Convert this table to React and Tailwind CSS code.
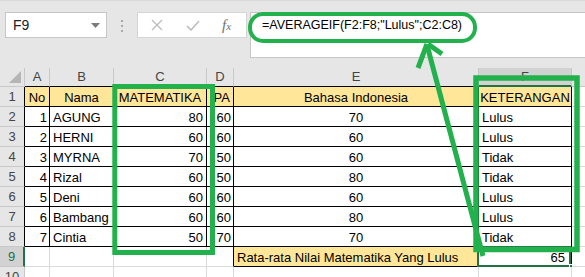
import React from "react";

// Sheet data: row 1 is the header, rows 2-8 the students
const rows = [
  ["No", "Nama", "MATEMATIKA", "IPA", "Bahasa Indonesia", "KETERANGAN"],
  [1, "AGUNG", 80, 60, 70, "Lulus"],
  [2, "HERNI", 60, 60, 60, "Lulus"],
  [3, "MYRNA", 70, 50, 60, "Tidak"],
  [4, "Rizal", 60, 50, 80, "Tidak"],
  [5, "Deni", 60, 60, 60, "Lulus"],
  [6, "Bambang", 60, 60, 80, "Lulus"],
  [7, "Cintia", 50, 70, 70, "Tidak"],
];

const letters = ["A", "B", "C", "D", "E", "F", "G"];
const align = [
  "justify-end pr-[2px]",
  "justify-start pl-[3px]",
  "justify-end pr-[3px]",
  "justify-end pr-[2px]",
  "justify-center",
  "justify-start pl-[3px]",
  "justify-start",
];

// cells that carry the black table border
const bordered = (r, c) =>
  (r >= 1 && r <= 8 && c >= 0 && c <= 5) || (r === 9 && (c === 4 || c === 5));

const FormulaBar = () => (
  <div className="flex h-[68px] items-start border-t border-[#d9d9d9] bg-[#e6e6e6] pt-[11px]">
    <div className="ml-[5px] flex h-[26px] w-[102px] items-center justify-between border border-[#c6c6c6] bg-white pl-[7px] pr-[6px]">
      <span className="text-[14px] text-[#222]">F9</span>
      <svg width="9" height="5" viewBox="0 0 9 5">
        <path d="M0 0h9L4.5 5z" fill="#7a7a7a" />
      </svg>
    </div>
    <div className="flex w-[30px] flex-col items-center gap-[3px] pt-[8px]">
      <span className="h-[2px] w-[2px] bg-[#a8a8a8]" />
      <span className="h-[2px] w-[2px] bg-[#a8a8a8]" />
      <span className="h-[2px] w-[2px] bg-[#a8a8a8]" />
    </div>
    <div className="flex h-[26px] w-[110px] items-center border border-[#d4d4d4] bg-white">
      <svg className="ml-[13px]" width="12" height="12" viewBox="0 0 12 12">
        <path d="M1 1l10 10M11 1L1 11" stroke="#bdbdbd" strokeWidth="1.4" />
      </svg>
      <svg className="ml-[23px]" width="14" height="11" viewBox="0 0 14 11">
        <path d="M1 6l4 4 8-9" stroke="#bdbdbd" strokeWidth="1.6" fill="none" />
      </svg>
      <span className="ml-[22px] font-['Liberation_Serif',serif] text-[15px] italic text-[#6e6e6e]">
        f<span className="text-[11px]">x</span>
      </span>
    </div>
    <div className="ml-[3px] h-[46px] flex-1 border border-r-0 border-[#c6c6c6] bg-white pl-[11px] pt-[2px] text-[12.5px] leading-[21px] text-black">
      =AVERAGEIF(F2:F8;"Lulus";C2:C8)
    </div>
  </div>
);

const ColHeader = ({ c }) => {
  const active = c === 5;
  // column G runs past the window, so its letter sits out of view
  const offset = c === 6 ? "justify-start overflow-hidden pl-[48px]" : "justify-center";
  return (
    <div
      className={`flex items-center border-r border-r-[#c8c8c8] text-[13px] ${offset} ${
        active
          ? "border-b-2 border-b-[#217346] bg-[#d2d2d2] text-[#444]"
          : `border-b ${bordered(1, c) ? "border-b-black" : "border-b-[#c8c8c8]"} bg-[#e6e6e6] text-[#444]`
      }`}
    >
      {letters[c]}
    </div>
  );
};

const RowHeader = ({ r }) => {
  const active = r === 9;
  return (
    <div
      className={`flex items-center justify-center border-b border-b-[#c8c8c8] text-[13px] ${
        active
          ? "border-r-2 border-r-[#217346] bg-[#d2d2d2] text-[#217346]"
          : `border-r ${bordered(r, 0) ? "border-r-black" : "border-r-[#c8c8c8]"} bg-[#e6e6e6] text-[#444]`
      }`}
    >
      {r}
    </div>
  );
};

const Cell = ({ r, c, children }) => {
  const right = bordered(r, c) || bordered(r, c + 1);
  const bottom = bordered(r, c) || bordered(r + 1, c);
  const yellow = r === 1 && c <= 5;
  const alignment = r === 1 ? "justify-center" : align[c];
  return (
    <div
      className={`relative flex items-center overflow-hidden whitespace-nowrap border-r border-b pt-[2px] text-[13px] ${
        right ? "border-r-black" : "border-r-[#dadada]"
      } ${bottom ? "border-b-black" : "border-b-[#dadada]"} ${
        yellow ? "bg-[#ffe699]" : "bg-white"
      } ${alignment}`}
    >
      {children}
    </div>
  );
};

const Sheet = () => {
  const body = [];
  for (let r = 1; r <= 10; r++) {
    body.push(<RowHeader key={`h${r}`} r={r} />);
    for (let c = 0; c < 7; c++) {
      const key = `${r}-${c}`;
      if (r <= 8) {
        body.push(
          <Cell key={key} r={r} c={c}>
            {c <= 5 ? rows[r - 1][c] : null}
          </Cell>
        );
      } else if (r === 9 && c === 4) {
        body.push(
          <div
            key={key}
            className="flex items-center justify-start whitespace-nowrap border-r border-b border-black bg-[#ffe699] pl-[3px] pt-[2px] text-[13px]"
          >
            Rata-rata Nilai Matematika Yang Lulus
          </div>
        );
      } else if (r === 9 && c === 5) {
        body.push(
          <div
            key={key}
            className="relative flex items-center justify-end border-r border-b border-black bg-white pr-[6px] pt-[2px] text-[13px]"
          >
            65
            <div className="absolute left-[-2px] top-[-1px] h-[calc(100%+2px)] w-[calc(100%+2px)] border-2 border-[#217346]" />
            <div className="absolute bottom-[-4px] right-[-4px] h-[6px] w-[6px] border border-white bg-[#217346]" />
          </div>
        );
      } else {
        body.push(<Cell key={key} r={r} c={c} />);
      }
    }
  }

  return (
    <div className="grid grid-cols-[25px_25px_64px_93px_27px_245px_93px_1fr] grid-rows-[19px_repeat(10,20px)]">
      <div className="relative border-r border-b border-[#c8c8c8] bg-[#e6e6e6]">
        <svg className="absolute bottom-[3px] right-[3px]" width="12" height="12" viewBox="0 0 12 12">
          <path d="M12 0v12H0z" fill="#b5b5b5" />
        </svg>
      </div>
      {letters.map((_, c) => (
        <ColHeader key={c} c={c} />
      ))}
      {body}
    </div>
  );
};

// hand-drawn green marks on top of the sheet
const Marks = () => (
  <svg
    className="pointer-events-none absolute inset-0"
    width="585"
    height="277"
    viewBox="0 0 585 277"
    fill="none"
    stroke="#22b14c"
  >
    <rect x="250" y="14" width="225" height="27" rx="13" strokeWidth="4" />
    <rect x="114.8" y="86.5" width="97.7" height="166" strokeWidth="5" />
    <rect x="476" y="78" width="101" height="171.5" strokeWidth="5.5" />
    <path d="M483 256L427 45" strokeWidth="5" />
    <path d="M427 44L418 68M428 44L442 54" strokeWidth="5" />
  </svg>
);

export default function App() {
  return (
    <div className="relative h-[277px] w-[585px] overflow-hidden bg-white font-['Liberation_Sans',sans-serif] text-black">
      <FormulaBar />
      <Sheet />
      <Marks />
    </div>
  );
}
